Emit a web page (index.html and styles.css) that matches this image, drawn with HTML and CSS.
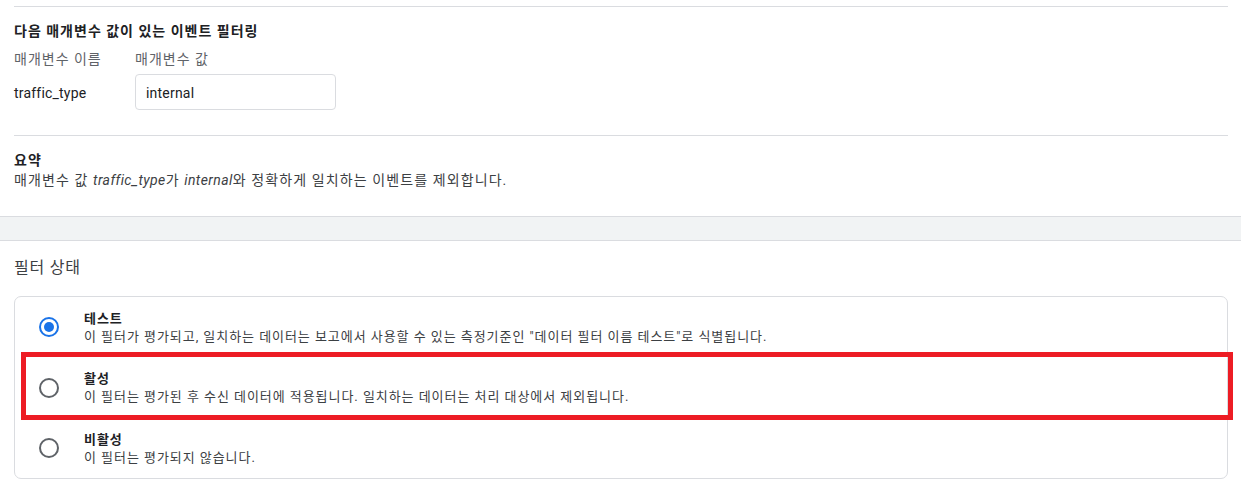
FILE: index.html
```html
<!DOCTYPE html>
<html lang="ko">
<head>
<meta charset="utf-8">
<link rel="stylesheet" href="styles.css">
</head>
<body>
<div class="panel">
  <div class="rule first"></div>
  <div class="heading">다음 매개변수 값이 있는 이벤트 필터링</div>
  <div class="param-grid">
    <div class="label">매개변수 이름</div>
    <div class="label">매개변수 값</div>
    <div class="param-name">traffic_type</div>
    <div class="input">internal</div>
  </div>
  <div class="rule second"></div>
  <div class="summary-title">요약</div>
  <div class="summary-text">매개변수 값 <em>traffic_type</em>가 <em>internal</em>와 정확하게 일치하는 이벤트를 제외합니다.</div>
</div>
<div class="band"></div>
<div class="status">
  <div class="status-title">필터 상태</div>
  <div class="card">
    <div class="option">
      <span class="radio checked"></span>
      <div class="option-text">
        <div class="option-title">테스트</div>
        <div class="option-desc">이 필터가 평가되고, 일치하는 데이터는 보고에서 사용할 수 있는 측정기준인 "데이터 필터 이름 테스트"로 식별됩니다.</div>
      </div>
    </div>
    <div class="option">
      <span class="radio"></span>
      <div class="option-text">
        <div class="option-title">활성</div>
        <div class="option-desc">이 필터는 평가된 후 수신 데이터에 적용됩니다. 일치하는 데이터는 처리 대상에서 제외됩니다.</div>
      </div>
    </div>
    <div class="option">
      <span class="radio"></span>
      <div class="option-text">
        <div class="option-title">비활성</div>
        <div class="option-desc">이 필터는 평가되지 않습니다.</div>
      </div>
    </div>
    <div class="highlight"></div>
  </div>
</div>
</body>
</html>
```

FILE: styles.css
```css
* { box-sizing: border-box; }
html, body { margin: 0; padding: 0; background: #fff; }
body {
  font-family: Roboto, "Noto Sans CJK KR", sans-serif;
  color: #202124;
  font-size: 13px;
}
.panel { padding: 0 13px 0 14px; }
.rule { height: 1px; background: #dadce0; }
.rule.first { margin-top: 6px; }
.heading {
  margin-top: 14px;
  font-size: 14px;
  font-weight: 700;
  line-height: 20px;
  letter-spacing: 1px;
}
.param-grid {
  display: grid;
  grid-template-columns: 121px 201px;
  row-gap: 5px;
  margin-top: 8px;
  align-items: center;
}
.label { color: #5f6368; font-size: 14px; line-height: 20px; letter-spacing: 1px; }
.param-name { font-size: 14px; line-height: 20px; padding-top: 2px; letter-spacing: 0.2px; }
.input {
  height: 36px;
  border: 1px solid #dadce0;
  border-radius: 4px;
  padding-left: 10px;
  padding-top: 1px;
  font-size: 14px;
  line-height: 34px;
  letter-spacing: 0.2px;
}
.rule.second { margin-top: 25px; }
.summary-title {
  margin-top: 14px;
  font-size: 14px;
  font-weight: 700;
  line-height: 20px;
  letter-spacing: 1px;
}
.summary-text {
  font-size: 14px;
  line-height: 21px;
  margin-bottom: 25px;
  letter-spacing: 1.1px;
  color: #3c4043;
}
.summary-text em { letter-spacing: 0.4px; }
.band {
  height: 25px;
  background: #f1f3f4;
  border-top: 1px solid #dadce0;
  border-bottom: 1px solid #dadce0;
}
.status { padding: 15px 13px 12px 14px; }
.status-title {
  font-size: 16px;
  line-height: 24px;
  color: #3c4043;
  letter-spacing: 0.8px;
}
.card {
  position: relative;
  margin-top: 16px;
  border: 1px solid #dadce0;
  border-radius: 7px;
}
.option {
  display: flex;
  align-items: center;
  height: 60px;
  padding-left: 24px;
  gap: 25px;
}
.option:nth-child(2) { height: 61px; }
.radio {
  flex: none;
  width: 20px;
  height: 20px;
  border: 2px solid #5f6368;
  border-radius: 50%;
  position: relative;
}
.radio.checked { border-color: #1a73e8; }
.radio.checked::after {
  content: "";
  position: absolute;
  left: 3px; top: 3px;
  width: 10px; height: 10px;
  border-radius: 50%;
  background: #1a73e8;
}
.option-text { line-height: 18px; padding-top: 1px; letter-spacing: 0.95px; }
.option-title { font-weight: 700; font-size: 13px; }
.option-desc { font-size: 13px; color: #3c4043; }
.highlight {
  position: absolute;
  left: 6px;
  top: 55px;
  width: 1212px;
  height: 68px;
  border: 5px solid #ed1c24;
  pointer-events: none;
}
```
